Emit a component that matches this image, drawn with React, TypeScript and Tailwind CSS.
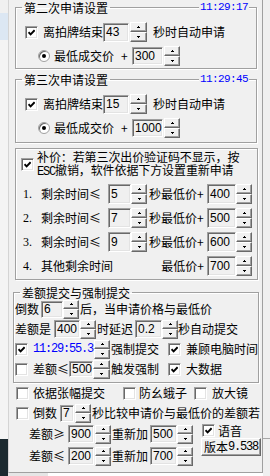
import type { ReactNode } from 'react';

const mono = "font-['Liberation_Mono',monospace]";

function Check({ checked = false }: { checked?: boolean }) {
  return (
    <div className="w-[13px] h-[13px] shrink-0 bg-white border border-t-[#a0a0a0] border-l-[#a0a0a0] border-r-white border-b-white shadow-[inset_1px_1px_0_#696969,inset_-1px_-1px_0_#e3e3e3] flex items-center justify-center">
      {checked && (
        <svg width="7" height="7" viewBox="0 0 7 7">
          <path d="M0.5 3.2 L2.6 5.4 L6.6 1.2" fill="none" stroke="#000" strokeWidth="1.9" />
        </svg>
      )}
    </div>
  );
}

function Radio() {
  return (
    <div className="w-[12px] h-[12px] shrink-0 rounded-full bg-white border border-[#a0a0a0] shadow-[inset_1px_1px_0_#696969] flex items-center justify-center">
      <div className="w-[4px] h-[4px] rounded-full bg-black" />
    </div>
  );
}

function Edit({ value, className }: { value: string; className: string }) {
  return (
    <div
      className={
        'shrink-0 bg-[#f0f0f0] border border-t-[#a0a0a0] border-l-[#a0a0a0] border-r-white border-b-white shadow-[inset_1px_1px_0_#696969,inset_-1px_-1px_0_#e3e3e3] pl-[2px] flex items-center text-[12px] leading-[14px] font-["Liberation_Sans",sans-serif] ' +
        className
      }
    >
      {value}
    </div>
  );
}

function Arrow({ up }: { up?: boolean }) {
  return (
    <svg width="3" height="2" viewBox="0 0 3 2" shapeRendering="crispEdges">
      {up ? (
        <>
          <rect x="1" y="0" width="1" height="1" fill="#000" />
          <rect x="0" y="1" width="3" height="1" fill="#000" />
        </>
      ) : (
        <>
          <rect x="0" y="0" width="3" height="1" fill="#000" />
          <rect x="1" y="1" width="1" height="1" fill="#000" />
        </>
      )}
    </svg>
  );
}

function Spin({ className = 'w-[16px] h-[20px]' }: { className?: string }) {
  const half =
    'flex-1 bg-[#f0f0f0] border border-t-white border-l-white border-r-[#696969] border-b-[#696969] shadow-[inset_-1px_-1px_0_#a0a0a0] flex items-center justify-center';
  return (
    <div className={'shrink-0 flex flex-col ' + className}>
      <div className={half}>
        <Arrow up />
      </div>
      <div className={half}>
        <Arrow />
      </div>
    </div>
  );
}

function Group({
  title,
  time,
  className,
  children,
}: {
  title?: string;
  time?: string;
  className: string;
  children: ReactNode;
}) {
  return (
    <div className={'relative ' + className}>
      <fieldset className="border border-[#a0a0a0] shadow-[1px_1px_0_#fff,inset_1px_1px_0_#fff] min-w-0">
        {title && <legend className="ml-[6px] px-[2px] h-[14px] leading-[15px] whitespace-nowrap">{title}</legend>}
        {children}
      </fieldset>
      {time && (
        <span className={'absolute top-0 right-[8px] px-[1px] bg-[#f0f0f0] h-[14px] leading-[15px] text-[11px] tracking-[-0.6px] text-[#0000ff] ' + mono}>
          {time}
        </span>
      )}
    </div>
  );
}

function ApplyGroup({
  title,
  time,
  secs,
  add,
  bottom,
  className,
}: {
  title: string;
  time: string;
  secs: string;
  add: string;
  bottom: string;
  className: string;
}) {
  return (
    <Group title={title} time={time} className={className}>
      <div className="mt-[8px] h-[20px] pl-[9px] flex items-center">
        <Check checked />
        <span className="ml-[5px] w-[60px] whitespace-nowrap">离拍牌结束</span>
        <Edit value={secs} className="w-[26px] h-[19px]" />
        <Spin className="ml-[1px] w-[17px] h-[20px]" />
        <span className="ml-[6px] whitespace-nowrap">秒时自动申请</span>
      </div>
      <div className={'mt-[4px] h-[20px] pl-[22px] flex items-center ' + bottom}>
        <Radio />
        <span className="ml-[4px] w-[67px] whitespace-nowrap">最低成交价</span>
        <span className="w-[11px]">+</span>
        <Edit value={add} className="w-[31px] h-[18px]" />
        <Spin className="ml-[1px] w-[16px] h-[20px]" />
      </div>
    </Group>
  );
}

function BuRow({ n, label, secs, price }: { n: string; label: string; secs?: string; price: string }) {
  return (
    <div className="h-[20px] pl-[7px] flex items-center">
      <span className="w-[18px] font-['Liberation_Serif',serif]">{n}</span>
      {secs ? (
        <>
          <span className="w-[67px] whitespace-nowrap">{label}</span>
          <Edit value={secs} className="w-[23px] h-[20px]" />
          <Spin className="w-[16px] h-[20px]" />
          <span className="ml-[2px] w-[58px] whitespace-nowrap">秒最低价+</span>
        </>
      ) : (
        <>
          <span className="w-[108px] whitespace-nowrap">{label}</span>
          <span className="w-[58px] pr-[3px] text-right whitespace-nowrap">最低价+</span>
        </>
      )}
      <Edit value={price} className="w-[29px] h-[20px]" />
      <Spin className="w-[16px] h-[20px]" />
    </div>
  );
}

export default function App() {
  return (
    <div className="w-[270px] h-[476px] overflow-hidden flex bg-[#f0f0f0] text-black text-[12px] leading-[14px] font-['Noto_Sans_CJK_SC',sans-serif]">
      {/* left edge of the window behind */}
      <div className="w-[8px] shrink-0 flex flex-col">
        <div className="h-[13px] bg-[#f0f0f0]" />
        <div className="h-[27px] bg-[#dce7f3]" />
        <div className="flex-1 bg-[#f4f4f4]" />
        <div className="h-[37px] bg-[#1c2a30]" />
      </div>

      <div className="w-[255px] shrink-0 flex flex-col">
        <div className="h-[473px] bg-[#f0f0f0] border-l border-l-[#d4d4d4] border-r border-r-[#a0a0a0] border-b border-b-[#a0a0a0] flex flex-col">
          <ApplyGroup title="第二次申请设置" time="11:29:17" secs="43" add="300" bottom="mb-[2px]" className="ml-[6px] mr-[5px]" />
          <ApplyGroup title="第三次申请设置" time="11:29:45" secs="15" add="1000" bottom="mb-[4px]" className="ml-[6px] mr-[5px] mt-[3px]" />

          <Group className="ml-[6px] mr-[4px] mt-[5px]">
            <div className="pt-[1px] pl-[5px] flex items-center">
              <Check checked />
              <div className="ml-[3px] text-[12px] leading-[13px] whitespace-nowrap tracking-[-0.1px]">
                <div>补价：若第三次出价验证码不显示，按</div>
                <div>
                  <span className={'text-[12px] tracking-[-1.2px] ' + mono}>ESC</span>撤销，软件依据下方设置重新申请
                </div>
              </div>
            </div>
            <div className="mt-[5px] pb-[3px] flex flex-col gap-[4px]">
              <BuRow n="1." label="剩余时间≤" secs="5" price="400" />
              <BuRow n="2." label="剩余时间≤" secs="7" price="500" />
              <BuRow n="3." label="剩余时间≤" secs="9" price="600" />
              <BuRow n="4." label="其他剩余时间" price="700" />
            </div>
          </Group>

          <Group title="差额提交与强制提交" className="ml-[4px] mr-[3px] mt-[5px]">
            <div className="pl-[1px] pb-[3px] flex flex-col">
              <div className="h-[20px] flex items-center">
                <span className="w-[24px] whitespace-nowrap">倒数</span>
                <Edit value="6" className="ml-[2px] w-[22px] h-[17px]" />
                <Spin className="w-[16px] h-[19px]" />
                <span className="ml-[1px] whitespace-nowrap">后，当申请价格与最低价</span>
              </div>
              <div className="h-[20px] flex items-center">
                <span className="w-[36px] whitespace-nowrap">差额是</span>
                <Edit value="400" className="ml-[3px] w-[26px] h-[18px]" />
                <Spin className="w-[16px] h-[19px]" />
                <span className="ml-[1px] w-[36px] whitespace-nowrap">时延迟</span>
                <Edit value="0.2" className="ml-[2px] w-[27px] h-[18px]" />
                <Spin className="w-[16px] h-[19px]" />
                <span className="whitespace-nowrap">秒自动提交</span>
              </div>
              <div className="h-[20px] flex items-center">
                <Check checked />
                <span className={'ml-[5px] w-[61px] text-[12px] tracking-[-1.2px] text-[#0000ff] ' + mono}>11:29:55.3</span>
                <Spin className="w-[16px] h-[19px]" />
                <span className="ml-[1px] w-[57px] whitespace-nowrap">强制提交</span>
                <Check checked />
                <span className="ml-[5px] whitespace-nowrap">兼顾电脑时间</span>
              </div>
              <div className="h-[20px] flex items-center">
                <Check />
                <span className="ml-[5px] w-[36px] whitespace-nowrap">差额≤</span>
                <Edit value="500" className="w-[24px] h-[16px]" />
                <Spin className="w-[17px] h-[19px]" />
                <span className="ml-[1px] w-[57px] whitespace-nowrap">触发强制</span>
                <Check checked />
                <span className="ml-[5px] whitespace-nowrap">大数据</span>
              </div>
            </div>
          </Group>

          <div className="pl-[7px] h-[20px] flex items-center">
            <Check />
            <span className="ml-[4px] w-[90px] whitespace-nowrap">依据张幅提交</span>
            <Check />
            <span className="ml-[3px] w-[55px] whitespace-nowrap">防幺蛾子</span>
            <Check />
            <span className="ml-[5px] whitespace-nowrap">放大镜</span>
          </div>
          <div className="pl-[7px] h-[20px] flex items-center">
            <Check />
            <span className="ml-[4px] w-[27px] whitespace-nowrap">倒数</span>
            <Edit value="7" className="w-[14px] h-[17px]" />
            <Spin className="ml-[1px] w-[16px] h-[19px]" />
            <span className="ml-[1px] whitespace-nowrap">秒比较申请价与最低价的差额若</span>
          </div>

          <div className="mt-[1px] flex">
            <div className="pl-[20px] flex flex-col gap-[2px]">
              <div className="h-[20px] flex items-center">
                <span className="w-[39px] whitespace-nowrap">差额≥</span>
                <Edit value="900" className="w-[26px] h-[18px]" />
                <Spin className="ml-[1px] w-[16px] h-[19px]" />
                <span className="ml-[1px] w-[38px] whitespace-nowrap">重新加</span>
                <Edit value="500" className="w-[27px] h-[18px]" />
                <Spin className="w-[16px] h-[19px]" />
              </div>
              <div className="h-[20px] flex items-center">
                <span className="w-[39px] whitespace-nowrap">差额≤</span>
                <Edit value="200" className="w-[26px] h-[18px]" />
                <Spin className="ml-[1px] w-[16px] h-[19px]" />
                <span className="ml-[1px] w-[38px] whitespace-nowrap">重新加</span>
                <Edit value="700" className="w-[27px] h-[18px]" />
                <Spin className="w-[16px] h-[19px]" />
              </div>
            </div>
            <div className="ml-[8px] flex flex-col">
              <div className="h-[13px] pl-[1px] flex items-center">
                <Check checked />
                <span className="ml-[3px] whitespace-nowrap">语音</span>
              </div>
              <button className="mt-[1px] w-[60px] h-[18px] bg-[#f0f0f0] border border-t-white border-l-white border-r-[#696969] border-b-[#696969] shadow-[inset_-1px_-1px_0_#a0a0a0] flex items-center justify-center whitespace-nowrap text-[12px] leading-[14px]">
                版本<span className={'text-[12px] tracking-[-1.2px] ' + mono}>9.538</span>
              </button>
            </div>
          </div>
        </div>
        <div className="flex-1 flex">
          <div className="w-[40px] bg-[#e6e6e6]" />
          <div className="flex-1 bg-white" />
        </div>
      </div>

      {/* right edge of the window behind */}
      <div className="flex-1 flex flex-col">
        <div className="h-[438px]" />
        <div className="h-px bg-[#a8a8a8]" />
        <div className="flex-1" />
      </div>
    </div>
  );
}
